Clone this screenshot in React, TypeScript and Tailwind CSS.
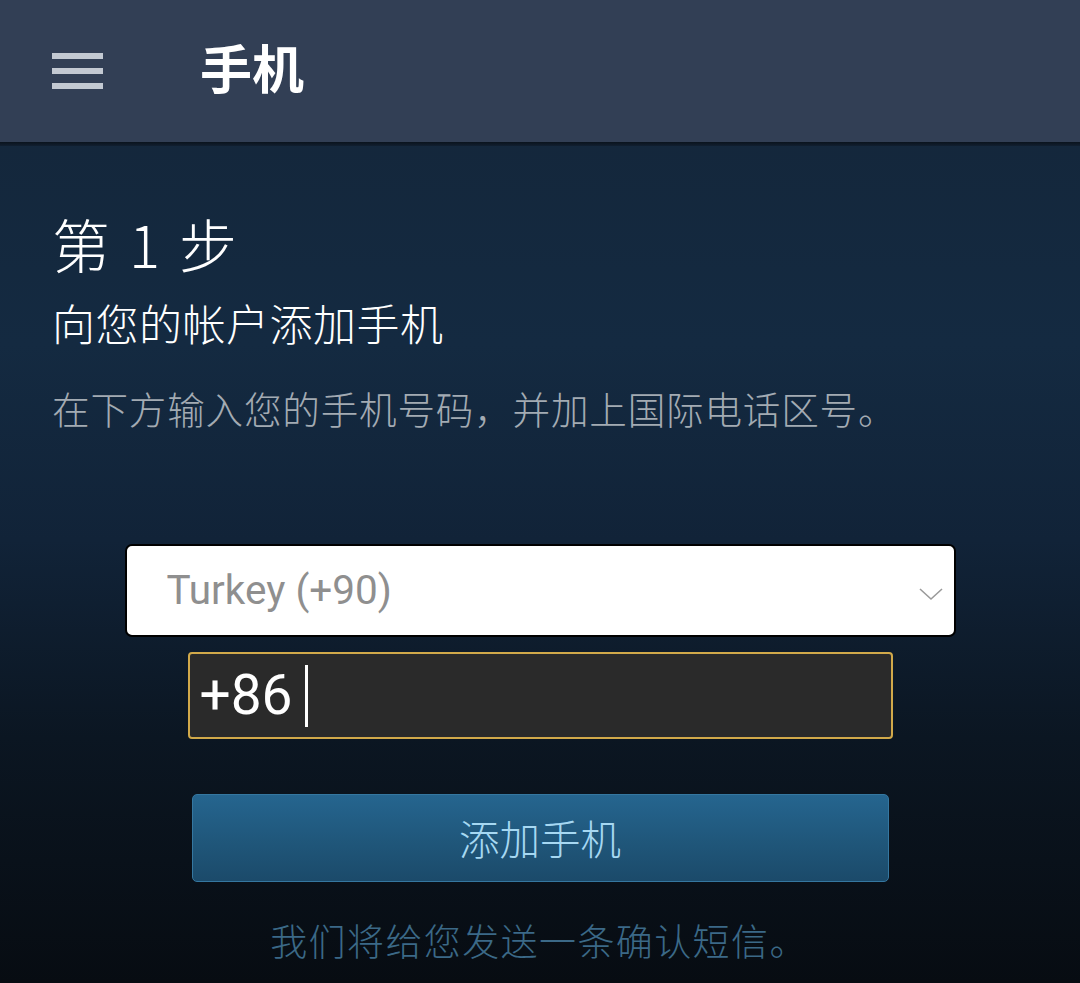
import React from "react";

const CJK = { fontFamily: '"Noto Sans CJK SC", "Noto Sans", sans-serif' };
const LAT = { fontFamily: 'Roboto, "Noto Sans CJK SC", sans-serif' };

export default function App() {
  return (
    <div
      className="w-[1080px] h-[983px] overflow-hidden flex flex-col bg-[linear-gradient(180deg,#142538_0%,#142a41_35%,#112338_55%,#0b1622_75%,#070c12_100%)]"
      style={CJK}
    >
      <header className="h-[142px] shrink-0 bg-[#323f55] flex items-center pl-[52px]">
        <div className="flex flex-col gap-[9px] w-[51px]">
          <div className="h-[6px] bg-[#c3c9d2]" />
          <div className="h-[6px] bg-[#c3c9d2]" />
          <div className="h-[6px] bg-[#c3c9d2]" />
        </div>
        <div className="ml-[97px] text-[52px] leading-[60px] font-bold text-white -mt-[8px]">手机</div>
      </header>
      <div className="h-[4px] shrink-0 bg-[linear-gradient(180deg,#0a131d,#111f30)]" />

      <main className="flex flex-col px-[52px] font-light">
        <h1 className="mt-[67px] text-[58px] leading-[60px] text-white font-light">
          第<span className="inline-block w-[19px]" />1<span className="inline-block w-[19px]" />步
        </h1>
        <h2 className="mt-[24px] text-[43px] leading-[50px] text-white tracking-[0.5px] font-light">向您的帐户添加手机</h2>
        <p className="mt-[36px] text-[37.6px] leading-[50px] text-[#a3abb3] tracking-[0.8px]">
          在下方输入您的手机号码，并加上国际电话区号。
        </p>

        <div className="mt-[111px] flex flex-col items-center">
          <div className="w-[831px] h-[93px] bg-white rounded-[7px] border-2 border-black flex items-center justify-between pl-[40px] pr-[10px]">
            <span className="text-[40.5px] text-[#8f8f8f] font-normal" style={LAT}>Turkey (+90)</span>
            <svg width="26" height="16" viewBox="0 0 26 16" className="mt-[6px]">
              <path d="M2 3 L13 13 L24 3" fill="none" stroke="#9a9a9a" strokeWidth="1.6" />
            </svg>
          </div>

          <div className="mt-[15px] w-[705px] h-[87px] bg-[#2a2a2a] border-2 border-[#d1a94a] rounded-[4px] flex items-center pl-[10px]">
            <span className="text-[55px] text-white leading-none font-normal" style={LAT}>+86</span>
            <span className="ml-[12px] w-[3px] h-[62px] bg-white" />
          </div>

          <button className="mt-[55px] w-[697px] h-[88px] rounded-[5px] border border-[#3577a0] bg-[linear-gradient(180deg,#25658f_0%,#1f5578_60%,#1b4a6a_100%)] text-[40.5px] text-[#a6d8f2] flex items-center justify-center">
            添加手机
          </button>

          <p className="mt-[33px] text-[37px] leading-[50px] text-[#3b6987] tracking-[1.4px] -ml-[2px]">我们将给您发送一条确认短信。</p>
        </div>
      </main>
    </div>
  );
}
